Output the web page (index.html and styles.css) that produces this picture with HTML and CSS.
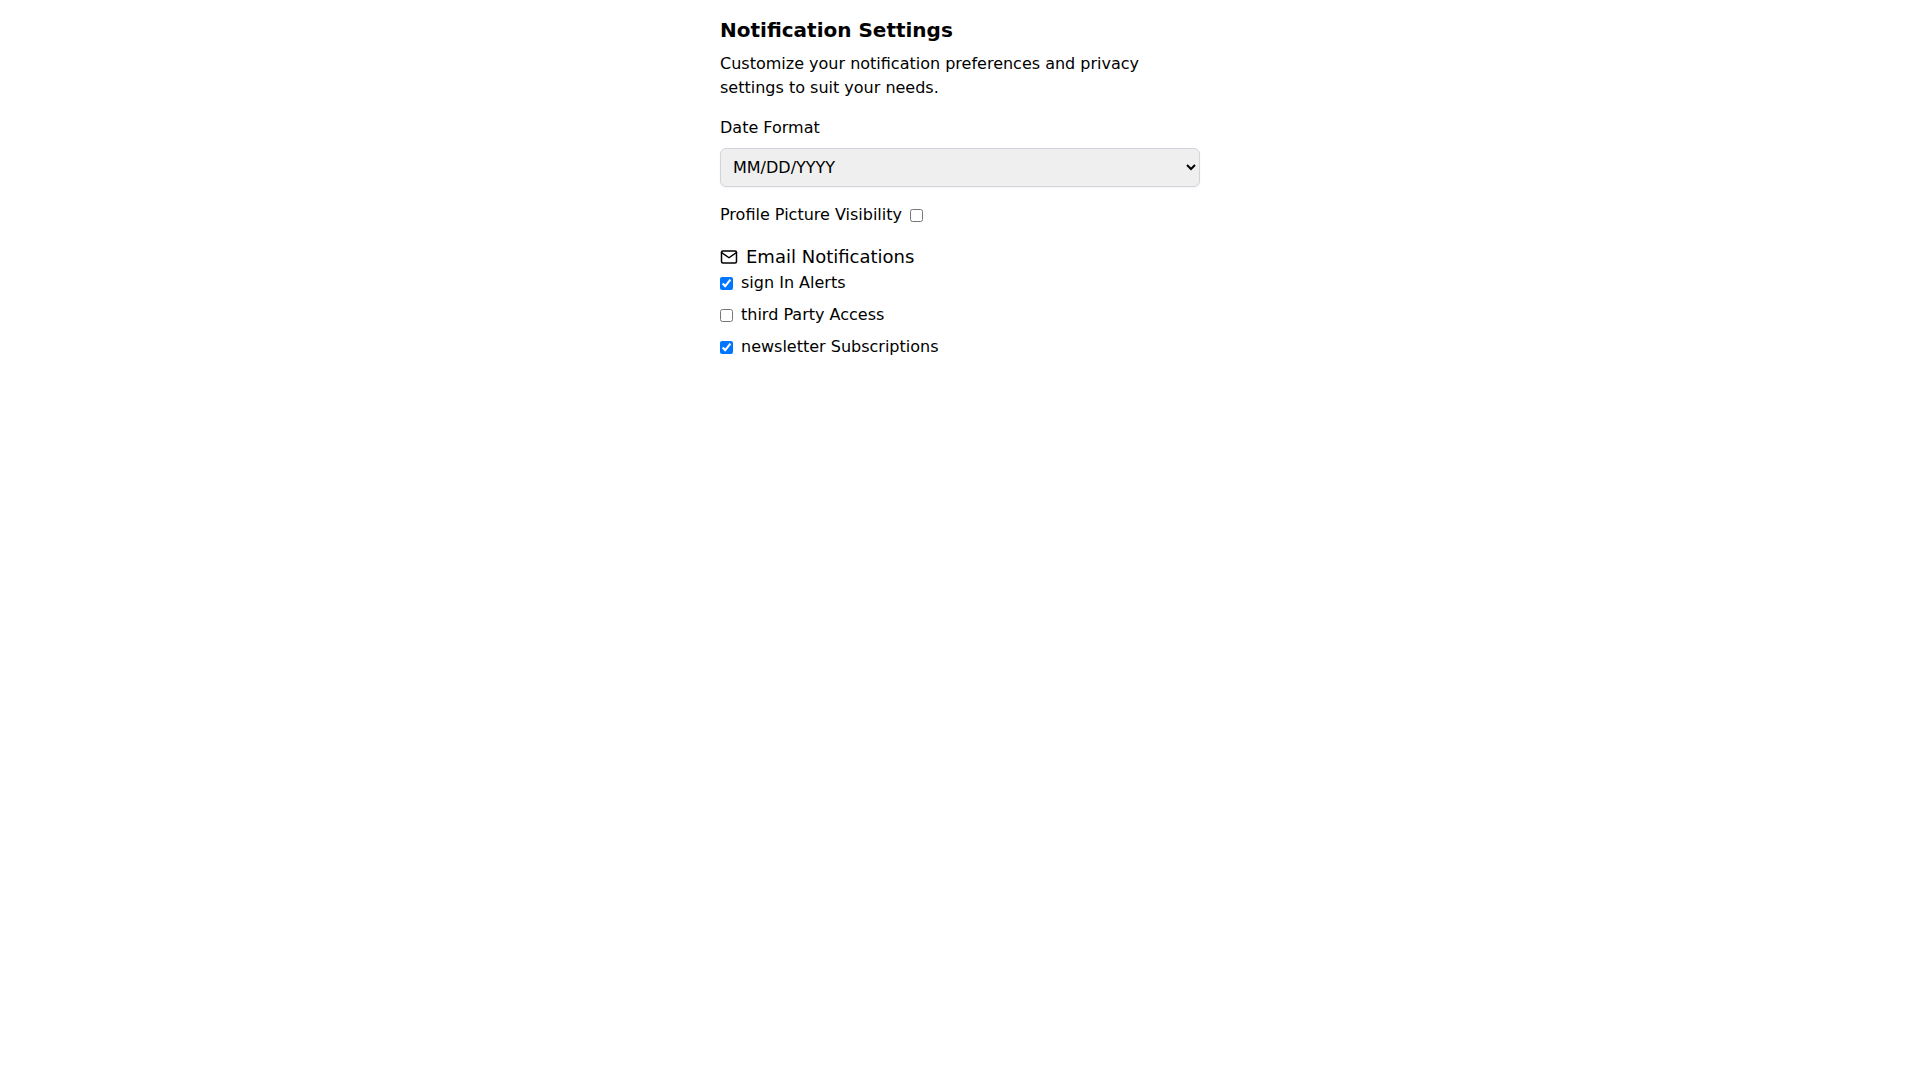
FILE: index.html
```html
<!DOCTYPE html>
<html lang="en">
<head>
    <meta charset="UTF-8">
    <meta name="viewport" content="width=device-width, initial-scale=1.0">
    <title>Notification Settings</title>
    <link rel="stylesheet" href="styles.css">
</head>
<body>
    <main class="settings">
        <h1 class="settings-title">Notification Settings</h1>
        <p class="settings-intro">Customize your notification preferences and privacy settings to suit your needs.</p>

        <div class="field">
            <label for="dateFormat" class="field-label">Date Format</label>
            <select id="dateFormat" class="field-select">
                <option selected>MM/DD/YYYY</option>
                <option>DD/MM/YYYY</option>
                <option>YYYY/MM/DD</option>
            </select>
        </div>

        <div class="check-row field">
            <label for="pictureVisibility">Profile Picture Visibility</label>
            <input type="checkbox" id="pictureVisibility" class="check">
        </div>

        <section>
            <h2 class="section-title">
                <svg class="section-icon" viewBox="0 0 24 24" fill="none" stroke="currentColor" stroke-width="2" stroke-linecap="round" stroke-linejoin="round" aria-hidden="true">
                    <path d="M4 4h16c1.1 0 2 .9 2 2v12c0 1.1-.9 2-2 2H4c-1.1 0-2-.9-2-2V6c0-1.1.9-2 2-2z"></path>
                    <polyline points="22,6 12,13 2,6"></polyline>
                </svg>
                Email Notifications
            </h2>
            <div class="check-list">
                <div class="check-row">
                    <input type="checkbox" id="signInAlerts" class="check" checked>
                    <label for="signInAlerts">sign In Alerts</label>
                </div>
                <div class="check-row">
                    <input type="checkbox" id="thirdPartyAccess" class="check">
                    <label for="thirdPartyAccess">third Party Access</label>
                </div>
                <div class="check-row">
                    <input type="checkbox" id="newsletterSubscriptions" class="check" checked>
                    <label for="newsletterSubscriptions">newsletter Subscriptions</label>
                </div>
            </div>
        </section>
    </main>
</body>
</html>
```

FILE: styles.css
```css
* {
    box-sizing: border-box;
}

body {
    margin: 0;
    background: #fff;
    color: #000;
    font-family: 'DejaVu Sans', sans-serif;
    font-size: 16px;
    line-height: 24px;
}

.settings {
    max-width: 512px;
    margin: 0 auto;
    padding: 16px;
}

.settings-title {
    margin: 0 0 8px;
    font-size: 20px;
    font-weight: bold;
    line-height: 28px;
}

.settings-intro {
    margin: 0 0 16px;
}

.field {
    margin-bottom: 16px;
}

.field-label {
    display: block;
    margin-bottom: 8px;
}

.field-select {
    display: block;
    width: 100%;
    padding: 8px;
    border: 1px solid #d1d5db;
    border-radius: 6px;
    background: #efefef;
    color: #000;
    font: inherit;
    box-shadow: 0 1px 2px rgba(0,0,0,0.05);
}

.check-row {
    display: flex;
    align-items: center;
    gap: 8px;
}

.check {
    margin: 0;
}

.section-title {
    display: flex;
    align-items: center;
    gap: 8px;
    margin: 0;
    font-size: 18px;
    font-weight: normal;
    line-height: 28px;
}

.section-icon {
    width: 18px;
    height: 18px;
}

.check-list {
    display: flex;
    flex-direction: column;
    gap: 8px;
}
```
